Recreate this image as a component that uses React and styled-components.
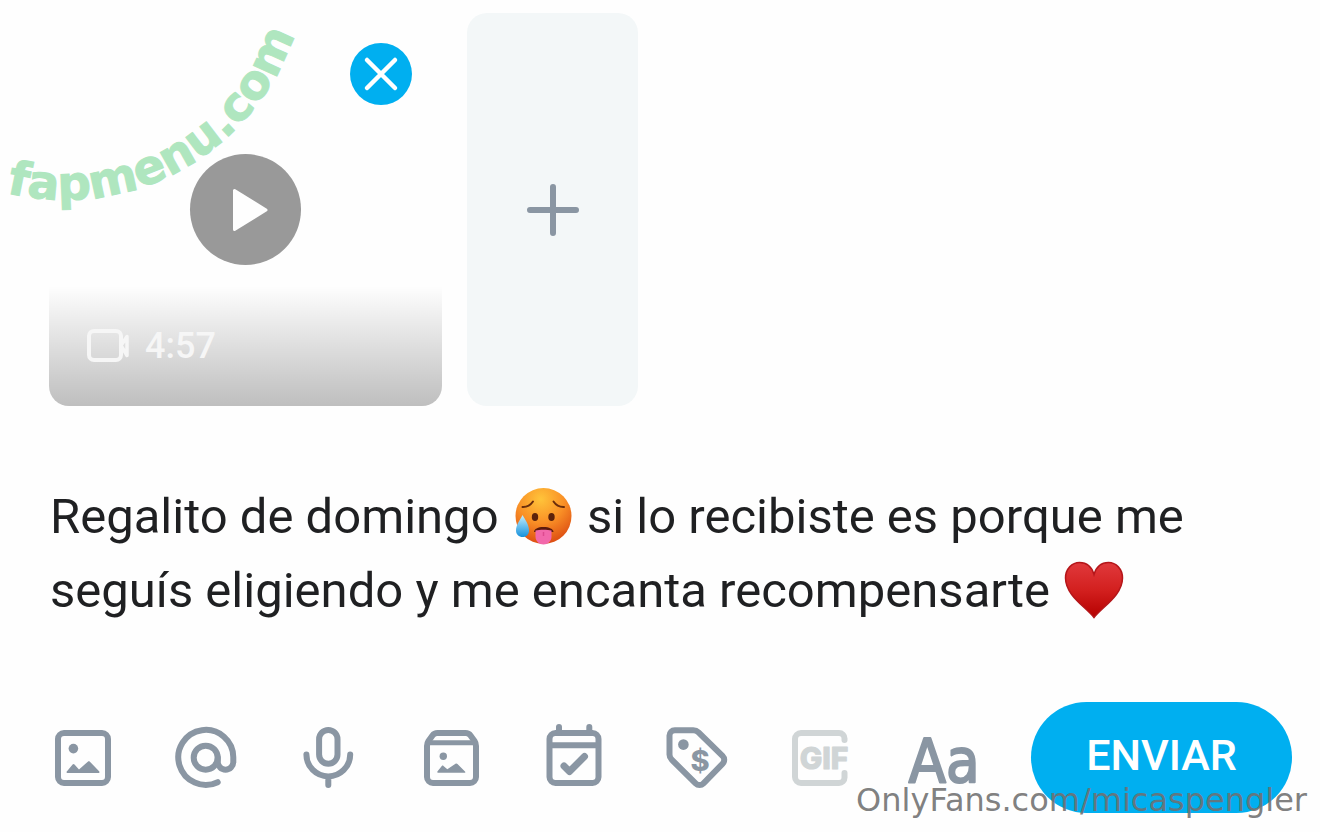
import styled, { createGlobalStyle } from "styled-components";

const GlobalStyle = createGlobalStyle`
  * {
    box-sizing: border-box;
  }

  body {
    margin: 0;
    background: #fefefe;
    font-family: Roboto, "Liberation Sans", sans-serif;
    color: #1f2022;
  }

  button {
    margin: 0;
    padding: 0;
    border: none;
    background: none;
    font: inherit;
    cursor: pointer;
  }
`;

const Composer = styled.main`
  position: relative;
  display: flex;
  flex-direction: column;
  padding-top: 13px;
  padding-bottom: 19px;
  overflow: hidden;
`;

// Attachments
const MediaRow = styled.section`
  display: flex;
  gap: 25px;
  padding: 0 49px;
`;

const VideoTile = styled.div`
  position: relative;
  display: flex;
  align-items: center;
  justify-content: center;
  width: 393px;
  height: 393px;
  border-radius: 20px;
  overflow: hidden;
`;

const AddTile = styled.button`
  display: flex;
  align-items: center;
  justify-content: center;
  width: 171px;
  border-radius: 20px;
  background: #f3f7f8;
  color: #8a96a3;
`;

const PlayButton = styled.button`
  display: flex;
  width: 111px;
  height: 111px;
  border-radius: 50%;
  background: #999999;
  color: #fefefe;
`;

const RemoveButton = styled.button`
  position: absolute;
  top: 30px;
  right: 30px;
  display: flex;
  width: 62px;
  height: 62px;
  border-radius: 50%;
  background: #00aff0;
  color: #ffffff;
`;

const VideoInfo = styled.div`
  position: absolute;
  right: 0;
  bottom: 0;
  left: 0;
  display: flex;
  align-items: center;
  gap: 14px;
  height: 120px;
  padding: 0 36px;
  background: linear-gradient(to bottom, rgba(0, 0, 0, 0), rgba(0, 0, 0, 0.25));
  color: #f6f6f6;
  font-size: 36px;
  font-weight: 500;
`;

// Message
const Message = styled.div`
  margin-top: 74px;
  padding: 0 50px;
  font-size: 49px;
  line-height: 74px;
  outline: none;
`;

const Emoji = styled.svg`
  width: 60px;
  height: 60px;
  margin: 0 2px;
  vertical-align: -13px;
`;

// Bottom bar
const Toolbar = styled.footer`
  display: flex;
  align-items: center;
  gap: 27px;
  margin-top: 74px;
  padding: 0 28px 0 22px;
`;

const Tools = styled.div`
  flex: 1;
  display: grid;
  grid-template-columns: repeat(8, 1fr);
  justify-items: center;
`;

const ToolButton = styled.button`
  display: flex;
  color: ${({ $muted }) => ($muted ? "#d0d5d6" : "#8a96a3")};
`;

const SendButton = styled.button`
  width: 261px;
  height: 111px;
  padding-bottom: 6px;
  border-radius: 56px;
  background: #00aff0;
  color: #ffffff;
  font-size: 43px;
  font-weight: 500;
`;

const IconText = styled.text`
  font-family: ${({ $light }) => ($light ? '"DejaVu Sans Condensed"' : "Inter")}, "Liberation Sans", sans-serif;
  font-size: ${({ $size }) => $size}px;
  font-weight: ${({ $light }) => ($light ? 400 : 800)};
  text-anchor: middle;
  fill: currentColor;
`;

// Watermarks
const CurvedMark = styled.svg`
  position: absolute;
  top: 0;
  left: 0;
  pointer-events: none;

  text {
    font-family: "DejaVu Sans", sans-serif;
    font-size: 47px;
    font-weight: 700;
    fill: #afe6bf;
    stroke: #afe6bf;
    stroke-width: 1px;
  }
`;

const ProfileMark = styled.span`
  position: absolute;
  right: 13px;
  bottom: 13px;
  color: rgba(112, 112, 112, 0.9);
  font-family: "DejaVu Sans", sans-serif;
  font-size: 32px;
  line-height: 38px;
  pointer-events: none;
`;

function Icon({ children, size = 74 }) {
  return (
    <svg
      width={size}
      height={size}
      viewBox={`0 0 ${size} ${size}`}
      fill="none"
      stroke="currentColor"
      strokeWidth="6"
      strokeLinecap="round"
      strokeLinejoin="round"
      overflow="visible"
      aria-hidden="true"
    >
      {children}
    </svg>
  );
}

const ImageIcon = () => (
  <Icon>
    <rect x="12" y="12" width="50" height="50" rx="6" />
    <g fill="currentColor" stroke="none">
      <circle cx="27.4" cy="27.6" r="4.8" />
      <path d="M21.5 52c-1 0-1.3-.8-.7-1.5l5.8-7c.6-.7 1.3-.7 1.9 0l4.5 5 8.8-7.8c.7-.6 1.5-.6 2.1 0l9.2 9.5c.8.9.4 1.8-.7 1.8z" />
    </g>
  </Icon>
);

const MentionIcon = () => (
  <Icon>
    <circle cx="36.7" cy="36.7" r="12" />
    <path d="M48.7 61.2A27.5 27.5 0 1 1 64.3 36.7v4.2a7.7 7.7 0 0 1-15.5 0v-4.2" />
  </Icon>
);

const MicIcon = () => (
  <Icon>
    <rect x="27.1" y="9" width="18.4" height="33.7" rx="9.2" />
    <path d="M14.4 33.5a21.9 21.9 0 0 0 43.8 0M36.3 56v8" />
  </Icon>
);

const VaultIcon = () => (
  <Icon>
    <path d="M12 25v31a6 6 0 0 0 6 6h37a6 6 0 0 0 6-6V25c0-2-.5-3.5-1.5-5l-4-5.5c-1.2-1.7-3-2.5-5-2.5h-28c-2 0-3.8.8-5 2.5l-4 5.5c-1 1.5-1.5 3-1.5 5z" />
    <path d="M13 21.7h47" strokeWidth="5" />
    <g fill="currentColor" stroke="none">
      <circle cx="28.3" cy="35.2" r="3.7" />
      <path d="M23 51.8c-.8 0-1-.6-.6-1.2l4.4-5.7c.5-.6 1.2-.6 1.7 0l3.8 3.4 8.2-5.6c.7-.5 1.4-.4 2 .2l7.5 7.5c.6.7.4 1.4-.5 1.4z" />
    </g>
  </Icon>
);

const ScheduleIcon = () => (
  <Icon>
    <rect x="12.5" y="12" width="49" height="50" rx="6" />
    <path d="M14 24.3h46M22 6v6M52.3 6v6" />
    <path d="M27 45l5.5 5.5 15-15" strokeWidth="7" />
  </Icon>
);

const PriceIcon = () => (
  <Icon>
    <path d="M9.5 14.5a5.3 5.3 0 0 1 5.3-5.3h18.5c2 0 3.8.8 5.2 2.2l24 23.5c2.3 2.3 2.3 5.6 0 7.9L43.5 62.3c-2.3 2.3-5.6 2.3-7.9 0L11.7 38.7c-1.4-1.4-2.2-3.2-2.2-5.2z" />
    <circle cx="23.4" cy="23.6" r="5.3" fill="currentColor" stroke="none" />
    <IconText x="40" y="50" $size={29} strokeWidth="0">$</IconText>
  </Icon>
);

const GifIcon = () => (
  <Icon>
    <path d="M61.5 19v-1.5a5.5 5.5 0 0 0-5.5-5.5H18a6 6 0 0 0-6 6v38a6 6 0 0 0 6 6h38a5.5 5.5 0 0 0 5.5-5.5V52" />
    <IconText x="41" y="48" $size={30} strokeWidth="1">GIF</IconText>
  </Icon>
);

const TextIcon = () => (
  <Icon>
    <IconText x="38" y="61" $size={61} $light strokeWidth="2">Aa</IconText>
  </Icon>
);

const VideoIcon = () => (
  <svg width="46" height="36" viewBox="0 0 46 36" fill="none" stroke="currentColor" strokeWidth="4" strokeLinejoin="round" aria-hidden="true">
    <rect x="4" y="3" width="32" height="29" rx="5" />
    <path d="M36 17.5l6-9v19z" strokeWidth="3.5" />
  </svg>
);

const HotFace = () => (
  <Emoji viewBox="0 0 60 60" role="img" aria-label="🥵">
    <defs>
      <radialGradient id="face" cx="0.45" cy="0.2" r="0.85">
        <stop offset="0" stopColor="#ffc43a" />
        <stop offset="0.5" stopColor="#f98f26" />
        <stop offset="1" stopColor="#d9440f" />
      </radialGradient>
      <linearGradient id="drop" x1="0" y1="0" x2="0" y2="1">
        <stop offset="0" stopColor="#c4efff" />
        <stop offset="1" stopColor="#1591dc" />
      </linearGradient>
    </defs>
    <circle cx="30.5" cy="30" r="28" fill="url(#face)" />
    <g fill="none" stroke="#6b2e0c" strokeWidth="2" strokeLinecap="round">
      <path d="M9.5 21c4 .2 8-1.8 10.5-5.5M51 21c-4 .2-8-1.8-10.5-5.5" />
    </g>
    <ellipse cx="22" cy="31" rx="3.2" ry="4" fill="#5c220b" />
    <ellipse cx="38.5" cy="31" rx="3.2" ry="4" fill="#5c220b" />
    <path d="M21 46c0-3 4-5 9.5-5s10 2 10 5z" fill="#5c1a0c" />
    <path d="M22.5 44.5c4-1 12-1 16 0v6c0 4.500-3.600 8-8 8s-8-3.500-8-8z" fill="#f268ab" />
    <path d="M30.5 46v4" stroke="#dd4a90" strokeWidth="1.5" />
    <path d="M9.5 29c3 5 6.5 10 6.5 15.5 0 4-2.6 6.5-6.3 6.5S3 48.5 3 44.5c0-5.5 4-10.5 6.5-15.5z" fill="url(#drop)" />
  </Emoji>
);

const Heart = () => (
  <Emoji viewBox="0 0 60 60" role="img" aria-label="♥️">
    <defs>
      <linearGradient id="heart" x1="0" y1="0" x2="0" y2="1">
        <stop offset="0" stopColor="#e0393c" />
        <stop offset="0.5" stopColor="#d3201f" />
        <stop offset="1" stopColor="#b50000" />
      </linearGradient>
    </defs>
    <path
      d="M30 57.5C22 47 1.5 35.5 1.5 18 1.5 9 8 2.5 15.5 2.5 23 2.5 28 7.5 30 14.5 32 7.5 37 2.5 44.5 2.5 52 2.5 58.5 9 58.5 18 58.5 35.5 38 47 30 57.5z"
      fill="url(#heart)"
      stroke="#b5161a"
      strokeWidth="1.5"
    />
  </Emoji>
);

const tools = [
  { label: "Añadir imagen", icon: ImageIcon },
  { label: "Mencionar", icon: MentionIcon },
  { label: "Grabar audio", icon: MicIcon },
  { label: "Galería", icon: VaultIcon },
  { label: "Programar", icon: ScheduleIcon },
  { label: "Precio", icon: PriceIcon },
  { label: "GIF", icon: GifIcon, muted: true },
  { label: "Formato de texto", icon: TextIcon },
];

export default function App() {
  return (
    <>
      <GlobalStyle />
      <Composer>
        <MediaRow>
          <VideoTile>
            <PlayButton aria-label="Reproducir">
              <svg width="111" height="111" viewBox="0 0 111 111" aria-hidden="true">
                <path d="M44.5 36.5v39l31.5-19.5z" fill="currentColor" stroke="currentColor" strokeWidth="3" strokeLinejoin="round" />
              </svg>
            </PlayButton>
            <VideoInfo>
              <VideoIcon />
              <span>4:57</span>
            </VideoInfo>
            <RemoveButton aria-label="Quitar">
              <svg width="62" height="62" viewBox="0 0 62 62" stroke="currentColor" strokeWidth="4.5" strokeLinecap="round" aria-hidden="true">
                <path d="M17 17l28 28M45 17l-28 28" />
              </svg>
            </RemoveButton>
          </VideoTile>
          <AddTile aria-label="Añadir archivo">
            <Icon>
              <path d="M37 14v46M14 37h46" />
            </Icon>
          </AddTile>
        </MediaRow>

        <Message role="textbox" aria-multiline="true" aria-label="Mensaje" contentEditable suppressContentEditableWarning spellCheck={false}>
          Regalito de domingo <HotFace /> si lo recibiste es porque me seguís eligiendo y me encanta recompensarte <Heart />
        </Message>

        <Toolbar>
          <Tools>
            {tools.map(({ label, icon: ToolIcon, muted }) => (
              <ToolButton key={label} aria-label={label} $muted={muted} disabled={muted}>
                <ToolIcon />
              </ToolButton>
            ))}
          </Tools>
          <SendButton>ENVIAR</SendButton>
        </Toolbar>

        <CurvedMark width="320" height="230" viewBox="0 0 320 230">
          <path id="arc" d="M6.5 192.8A242 242 0 0 0 303.6 -4" fill="none" />
          <text>
            <textPath href="#arc">fapmenu.com</textPath>
          </text>
        </CurvedMark>
        <ProfileMark>OnlyFans.com/micaspengler</ProfileMark>
      </Composer>
    </>
  );
}
